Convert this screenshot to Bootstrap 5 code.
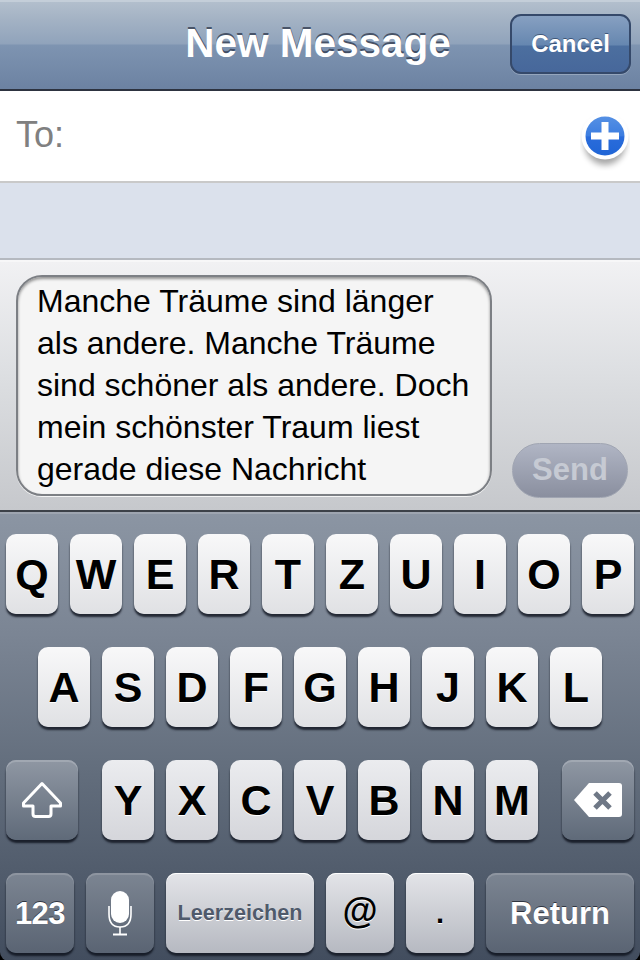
<!DOCTYPE html>
<html lang="de">
<head>
<meta charset="utf-8">
<title>New Message</title>
<link href="https://cdn.jsdelivr.net/npm/bootstrap@5.3.0/dist/css/bootstrap.min.css" rel="stylesheet">
<style>
html,body{height:960px;overflow:hidden;background:#000}
body{font-family:"Liberation Sans",Arial,sans-serif;width:640px;color:#000}
.top-bar{height:91px;display:grid;grid-template-columns:1fr auto 1fr;align-items:center;border-bottom:2px solid #2d3340;
 background:linear-gradient(#b4c0ce 0,#a3b2c4 20px,#90a3bb 44px,#7e94b1 45px,#6c82a2 89px);padding-bottom:2px;box-shadow:inset 0 2px 0 #c4ced9}
.top-title{font-size:40.5px;font-weight:700;color:#fff;margin:0 0 0 -4px;line-height:1;text-shadow:0 -2px 0 rgba(45,55,75,.75)}
.cancel-btn{width:121px;height:60px;padding:0;border:2px solid #35496a;border-radius:11px;color:#fff;font-weight:700;font-size:24px;
 background:linear-gradient(#87a0c1 0,#6687b0 29px,#4c6f9f 30px,#46669a 60px);box-shadow:0 1px 0 rgba(255,255,255,.25);text-shadow:0 -1px 0 rgba(30,50,80,.6);margin-right:9px}
.to-row{height:92px;background:#fff;border-bottom:2px solid #c9c9c9;padding:0 10px 0 16px}
.to-label{font-size:36px;line-height:1;color:#808080;margin-top:-2px}
.plus-btn{display:block;width:50px;height:60px;margin-top:10px}
.subject-row{height:77px;background:#dbe1ec;border-bottom:2px solid #b5b9c0}
.composer{height:252px;padding:13px 12px 0 16px;border-top:2px solid #f7f7f8;border-bottom:2px solid #3c4148;
 background:linear-gradient(#f1f1f3 0,#dddfe2 110px,#c6c8cc 248px);gap:20px}
.bubble{width:476px;height:221px;background:#f5f5f5;border:2px solid #7c7f84;border-radius:26px;padding:3px 0 0 19px;font-size:32px;line-height:42px;
 box-shadow:inset 0 2px 3px rgba(0,0,0,.4),0 1px 0 rgba(255,255,255,.8);white-space:nowrap;overflow:hidden}
.send-btn{width:116px;height:55px;padding:0;margin-bottom:12px;border:1px solid #a0a5b2;border-radius:28px;font-size:31px;font-weight:700;color:#c6cad3;
 background:linear-gradient(#b0b5c4,#8a8f9f);opacity:1}
.keyboard{height:449px;padding-top:20px;border-radius:0 0 9px 9px;gap:33px;border-top:2px solid #9ea5b0;
 background:linear-gradient(#8b95a3 0,#7b8594 120px,#626d7c 260px,#424d5e 447px)}
.key-row{gap:12px;height:80px}
.kb-key{height:80px;width:52px;padding:0;border:0;border-radius:10px;display:flex;align-items:center;justify-content:center;font-weight:700;font-size:43px;line-height:1;color:#000;
 background:linear-gradient(#f8f8f9,#e0e1e4);box-shadow:0 3px 2px rgba(20,25,35,.85);text-shadow:0 1px 0 #fff}
.kb-key.light-low{background:linear-gradient(#e3e4e8,#b6b9c1);box-shadow:inset 0 1px 0 #fff,0 3px 2px rgba(20,25,35,.85)}
.kb-key.mid-low{background:linear-gradient(#ebecef,#d5d6db)}
.kb-key.dark{background:linear-gradient(#8f97a3,#5f6a79);box-shadow:inset 0 2px 0 #a1a8b2,0 3px 2px rgba(15,20,30,.85);color:#fff;text-shadow:0 -1px 0 rgba(30,35,45,.8)}
.kb-key.dark-low{background:linear-gradient(#7c8592,#5a6473);box-shadow:inset 0 2px 0 #8e95a0,0 3px 2px rgba(15,20,30,.85);color:#fff;text-shadow:0 -1px 0 rgba(30,35,45,.8)}
.w-side{width:72px}
.w-shift-gap{margin-right:12px}
.w-del-gap{margin-left:12px}
.w-68{width:68px}
.w-148{width:148px}
.f-123{font-size:31px;letter-spacing:-.5px}
.f-space{font-size:21.6px;color:#4f5a6b;text-shadow:0 1px 0 #fff}
.f-at{font-size:36px;padding-bottom:4px}
.f-dot{font-size:29px}
.f-return{font-size:31px}
</style>
</head>
<body>
<header class="top-bar">
  <div></div>
  <h1 class="top-title">New Message</h1>
  <div class="d-flex justify-content-end"><button class="btn cancel-btn" type="button">Cancel</button></div>
</header>
<div class="to-row d-flex align-items-center justify-content-between">
  <span class="to-label">To:</span>
  <svg class="plus-btn" viewBox="0 0 50 60" aria-hidden="true">
    <defs>
      <linearGradient id="pg" x1="0" y1="0" x2="0" y2="1"><stop offset="0" stop-color="#5590e4"/><stop offset=".5" stop-color="#3c7de0"/><stop offset=".52" stop-color="#2a6cdb"/><stop offset="1" stop-color="#2065d6"/></linearGradient>
      <filter id="ps" x="-30%" y="-30%" width="160%" height="170%"><feGaussianBlur stdDeviation="3"/></filter>
    </defs>
    <ellipse cx="25" cy="31" rx="21" ry="23" fill="#000" opacity=".35" filter="url(#ps)"/>
    <circle cx="25" cy="25" r="23.5" fill="#fff"/>
    <circle cx="25" cy="25" r="19.5" fill="url(#pg)"/>
    <rect x="21.5" y="11" width="7" height="28" fill="#fff"/>
    <rect x="11" y="21.5" width="28" height="7" fill="#fff"/>
  </svg>
</div>
<div class="subject-row"></div>
<div class="composer d-flex align-items-end justify-content-between">
  <div class="bubble align-self-start">Manche Träume sind länger<br>als andere. Manche Träume<br>sind schöner als andere. Doch<br>mein schönster Traum liest<br>gerade diese Nachricht</div>
  <button class="btn send-btn" type="button">Send</button>
</div>
<main class="keyboard d-flex flex-column">
  <div class="key-row d-flex justify-content-center">
    <button class="kb-key" type="button">Q</button><button class="kb-key" type="button">W</button><button class="kb-key" type="button">E</button><button class="kb-key" type="button">R</button><button class="kb-key" type="button">T</button><button class="kb-key" type="button">Z</button><button class="kb-key" type="button">U</button><button class="kb-key" type="button">I</button><button class="kb-key" type="button">O</button><button class="kb-key" type="button">P</button>
  </div>
  <div class="key-row d-flex justify-content-center">
    <button class="kb-key" type="button">A</button><button class="kb-key" type="button">S</button><button class="kb-key" type="button">D</button><button class="kb-key" type="button">F</button><button class="kb-key" type="button">G</button><button class="kb-key" type="button">H</button><button class="kb-key" type="button">J</button><button class="kb-key" type="button">K</button><button class="kb-key" type="button">L</button>
  </div>
  <div class="key-row d-flex justify-content-center">
    <button class="kb-key dark w-side w-shift-gap" type="button" aria-label="Shift">
      <svg width="42" height="38" viewBox="0 0 42 38" aria-hidden="true"><path d="M21 2.5 L39.5 22 V25 H30 V33 Q30 35.5 27.5 35.5 H14.5 Q12 35.5 12 33 V25 H2.5 V22 Z" fill="none" stroke="#fff" stroke-width="3" stroke-linejoin="round"/></svg>
    </button>
    <button class="kb-key mid-low" type="button">Y</button><button class="kb-key mid-low" type="button">X</button><button class="kb-key mid-low" type="button">C</button><button class="kb-key mid-low" type="button">V</button><button class="kb-key mid-low" type="button">B</button><button class="kb-key mid-low" type="button">N</button><button class="kb-key mid-low" type="button">M</button>
    <button class="kb-key dark w-side w-del-gap" type="button" aria-label="Löschen">
      <svg width="50" height="36" viewBox="0 0 50 36" aria-hidden="true"><path d="M16 1 H46 Q49 1 49 4 V32 Q49 35 46 35 H16 L1 18 Z" fill="#fff"/><path d="M22 11 L37 26 M37 11 L22 26" stroke="#6f7886" stroke-width="5" fill="none"/></svg>
    </button>
  </div>
  <div class="key-row d-flex justify-content-center">
    <button class="kb-key dark-low w-68 f-123" type="button">123</button>
    <button class="kb-key dark-low w-68" type="button" aria-label="Mikrofon">
      <svg width="24" height="46" viewBox="0 0 24 46" aria-hidden="true"><rect x="3" y="1" width="18" height="32" rx="9" fill="#fff"/><path d="M1 16 V24 Q1 37 12 37 Q23 37 23 24 V16" fill="none" stroke="#fff" stroke-width="1.6"/><path d="M12 37 V44" stroke="#fff" stroke-width="1.6"/><path d="M5 44.5 H19" stroke="#fff" stroke-width="2"/></svg>
    </button>
    <button class="kb-key light-low w-148 f-space" type="button">Leerzeichen</button>
    <button class="kb-key light-low w-68 f-at" type="button">@</button>
    <button class="kb-key light-low w-68 f-dot" type="button">.</button>
    <button class="kb-key dark-low w-148 f-return" type="button">Return</button>
  </div>
</main>
</body>
</html>
